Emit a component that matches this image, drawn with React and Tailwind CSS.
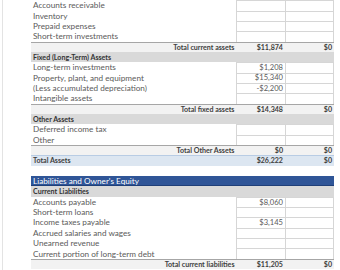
import React from "react";

const rows = [
  { t: "item", l: "Accounts receivable" },
  { t: "item", l: "Inventory" },
  { t: "item", l: "Prepaid expenses" },
  { t: "item", l: "Short-term investments" },
  { t: "total", l: "Total current assets", a: "$11,874", b: "$0" },
  { t: "section", l: "Fixed (Long-Term) Assets" },
  { t: "item", l: "Long-term investments", a: "$1,208" },
  { t: "item", l: "Property, plant, and equipment", a: "$15,340" },
  { t: "item", l: "(Less accumulated depreciation)", a: "-$2,200" },
  { t: "item", l: "Intangible assets" },
  { t: "total", l: "Total fixed assets", a: "$14,348", b: "$0" },
  { t: "section", l: "Other Assets" },
  { t: "item", l: "Deferred income tax" },
  { t: "item", l: "Other" },
  { t: "total", l: "Total Other Assets", a: "$0", b: "$0" },
  { t: "grand", l: "Total Assets", a: "$26,222", b: "$0" },
  { t: "blank" },
  { t: "banner", l: "Liabilities and Owner's Equity" },
  { t: "section", l: "Current Liabilities" },
  { t: "item", l: "Accounts payable", a: "$8,060" },
  { t: "item", l: "Short-term loans" },
  { t: "item", l: "Income taxes payable", a: "$3,145" },
  { t: "item", l: "Accrued salaries and wages" },
  { t: "item", l: "Unearned revenue" },
  { t: "item", l: "Current portion of long-term debt" },
  { t: "total", l: "Total current liabilities", a: "$11,205", b: "$0" },
];

function Row({ r }) {
  if (r.t === "item") {
    return (
      <div className="flex h-[10.35px] text-[#5a5a5a] text-[8.2px]">
        <div className="w-[205px] flex items-center pl-[2px] whitespace-nowrap">{r.l}</div>
        <div className="w-[49px] flex items-center justify-end pr-[2px] text-[7.6px] border-l border-t border-[#d6d6d6]">{r.a}</div>
        <div className="w-[49px] flex items-center justify-end pr-[2px] text-[7.6px] border-l border-r border-t border-[#d6d6d6]">{r.b}</div>
      </div>
    );
  }
  if (r.t === "total") {
    return (
      <div className="flex h-[10.35px] bg-[#f2f2f2] border-t border-[#a6a6a6] font-bold text-[#404040] text-[7.1px]">
        <div className="w-[205px] flex items-center justify-end pr-[1.5px] whitespace-nowrap">{r.l}</div>
        <div className="w-[49px] flex items-center justify-end pr-[2px]">{r.a}</div>
        <div className="w-[49px] flex items-center justify-end pr-[2px]">{r.b}</div>
      </div>
    );
  }
  if (r.t === "section") {
    return (
      <div className="flex h-[10.35px] bg-[#d9d9d9] font-bold text-[#333333] text-[7.1px] items-center pl-[2px] whitespace-nowrap">
        {r.l}
      </div>
    );
  }
  if (r.t === "grand") {
    return (
      <div className="flex h-[10.35px] bg-[#dce6f1] border-t border-[#b8cce4] font-bold text-[#404040] text-[7.1px]">
        <div className="w-[205px] flex items-center pl-[2px] whitespace-nowrap">{r.l}</div>
        <div className="w-[49px] flex items-center justify-end pr-[2px]">{r.a}</div>
        <div className="w-[49px] flex items-center justify-end pr-[2px]">{r.b}</div>
      </div>
    );
  }
  if (r.t === "banner") {
    return (
      <div className="flex h-[10.35px] bg-[#2f5597] border-b border-[#1f3f78] text-white text-[8.2px] items-center pl-[2px] whitespace-nowrap">
        {r.l}
      </div>
    );
  }
  return <div className="h-[10.35px]" />;
}

export default function App() {
  return (
    <div
      className="w-[340px] h-[270px] overflow-hidden bg-white flex leading-none"
      style={{ fontFamily: "Lato, 'Open Sans', sans-serif" }}
    >
      <div className="w-[2px]" />
      <div className="w-px h-full bg-[#e3e3e3]" />
      <div className="w-[28px]" />
      <div className="w-[303px] pt-[0.2px] flex flex-col">
        {rows.map((r, i) => (
          <Row key={i} r={r} />
        ))}
      </div>
    </div>
  );
}
